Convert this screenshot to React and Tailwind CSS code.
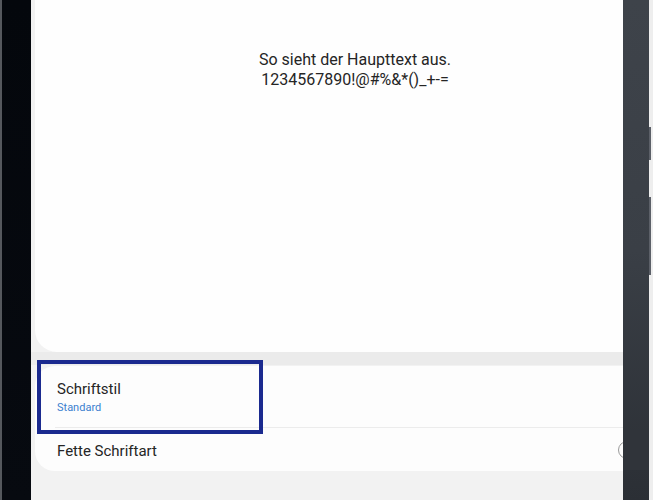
import React from 'react';

const App = () => {
  return (
    <div className="relative w-[653px] h-[500px] flex overflow-hidden bg-black" style={{ fontFamily: 'Roboto, "Noto Sans", sans-serif' }}>
      {/* Left bezel */}
      <div className="w-[31px] h-full flex shrink-0">
        <div className="w-[2px] h-full bg-[#55585d]"></div>
        <div className="flex-1 h-full bg-gradient-to-b from-[#04070c] to-[#070a10]"></div>
      </div>

      {/* Screen */}
      <div className="w-[592px] h-full shrink-0 overflow-hidden bg-[#f2f2f2]">
        <div className="w-[648px] px-[4px] flex flex-col">
          <div className="h-[352px] bg-[#fefefe] rounded-b-[22px] pt-[50px] flex flex-col items-center text-[#252525] text-[16px] leading-[20px]">
            <div>So sieht der Haupttext aus.</div>
            <div>1234567890!@#%&amp;*()_+-=</div>
          </div>
          <div className="h-[13px] bg-[#ebebeb] -mx-[4px]"></div>
          <div className="mt-[1px] h-[105px] bg-[#fdfdfd] rounded-[20px] flex flex-col">
            <div className="h-[61px] pl-[22px] pt-[14px] flex flex-col">
              <div className="text-[15px] leading-[19px] text-[#252525]">Schriftstil</div>
              <div className="text-[11px] leading-[15px] text-[#3b7fcf] mt-[1px]">Standard</div>
            </div>
            <div className="ml-[20px] h-px bg-[#ececec]"></div>
            <div className="flex-1 pl-[22px] pt-[3px] flex items-center justify-between pr-[20px]">
              <div className="text-[15px] leading-[20px] text-[#252525]">Fette Schriftart</div>
            </div>
          </div>
        </div>
      </div>

      {/* Right bezel */}
      <div className="w-[30px] h-full shrink-0 flex">
        <div className="w-[26px] h-full bg-gradient-to-b from-[#3e434a] via-[#3a3f46] to-[#2b2f35]"></div>
        <div className="w-[4px] h-full flex flex-col bg-[#eeeeee]">
          <div className="h-[127px]"></div>
          <div className="h-[33px] w-[2px] bg-[#5c6068]"></div>
          <div className="h-[37px]"></div>
          <div className="h-[78px] w-[2px] bg-[#5c6068]"></div>
        </div>
      </div>

      {/* Toggle peeking from under the bezel */}
      <div className="absolute left-[618px] top-[441px] w-[18px] h-[18px] rounded-full border-[1.5px] border-[#9a9a9a]"></div>
      <div className="absolute left-[623px] top-[430px] w-[26px] h-[40px] bg-[#30343a]"></div>

      {/* Highlight box */}
      <div className="absolute left-[37px] top-[360px] w-[226px] h-[74px] border-[4px] border-[#1b2a8f]"></div>
    </div>
  );
};

export default App;
